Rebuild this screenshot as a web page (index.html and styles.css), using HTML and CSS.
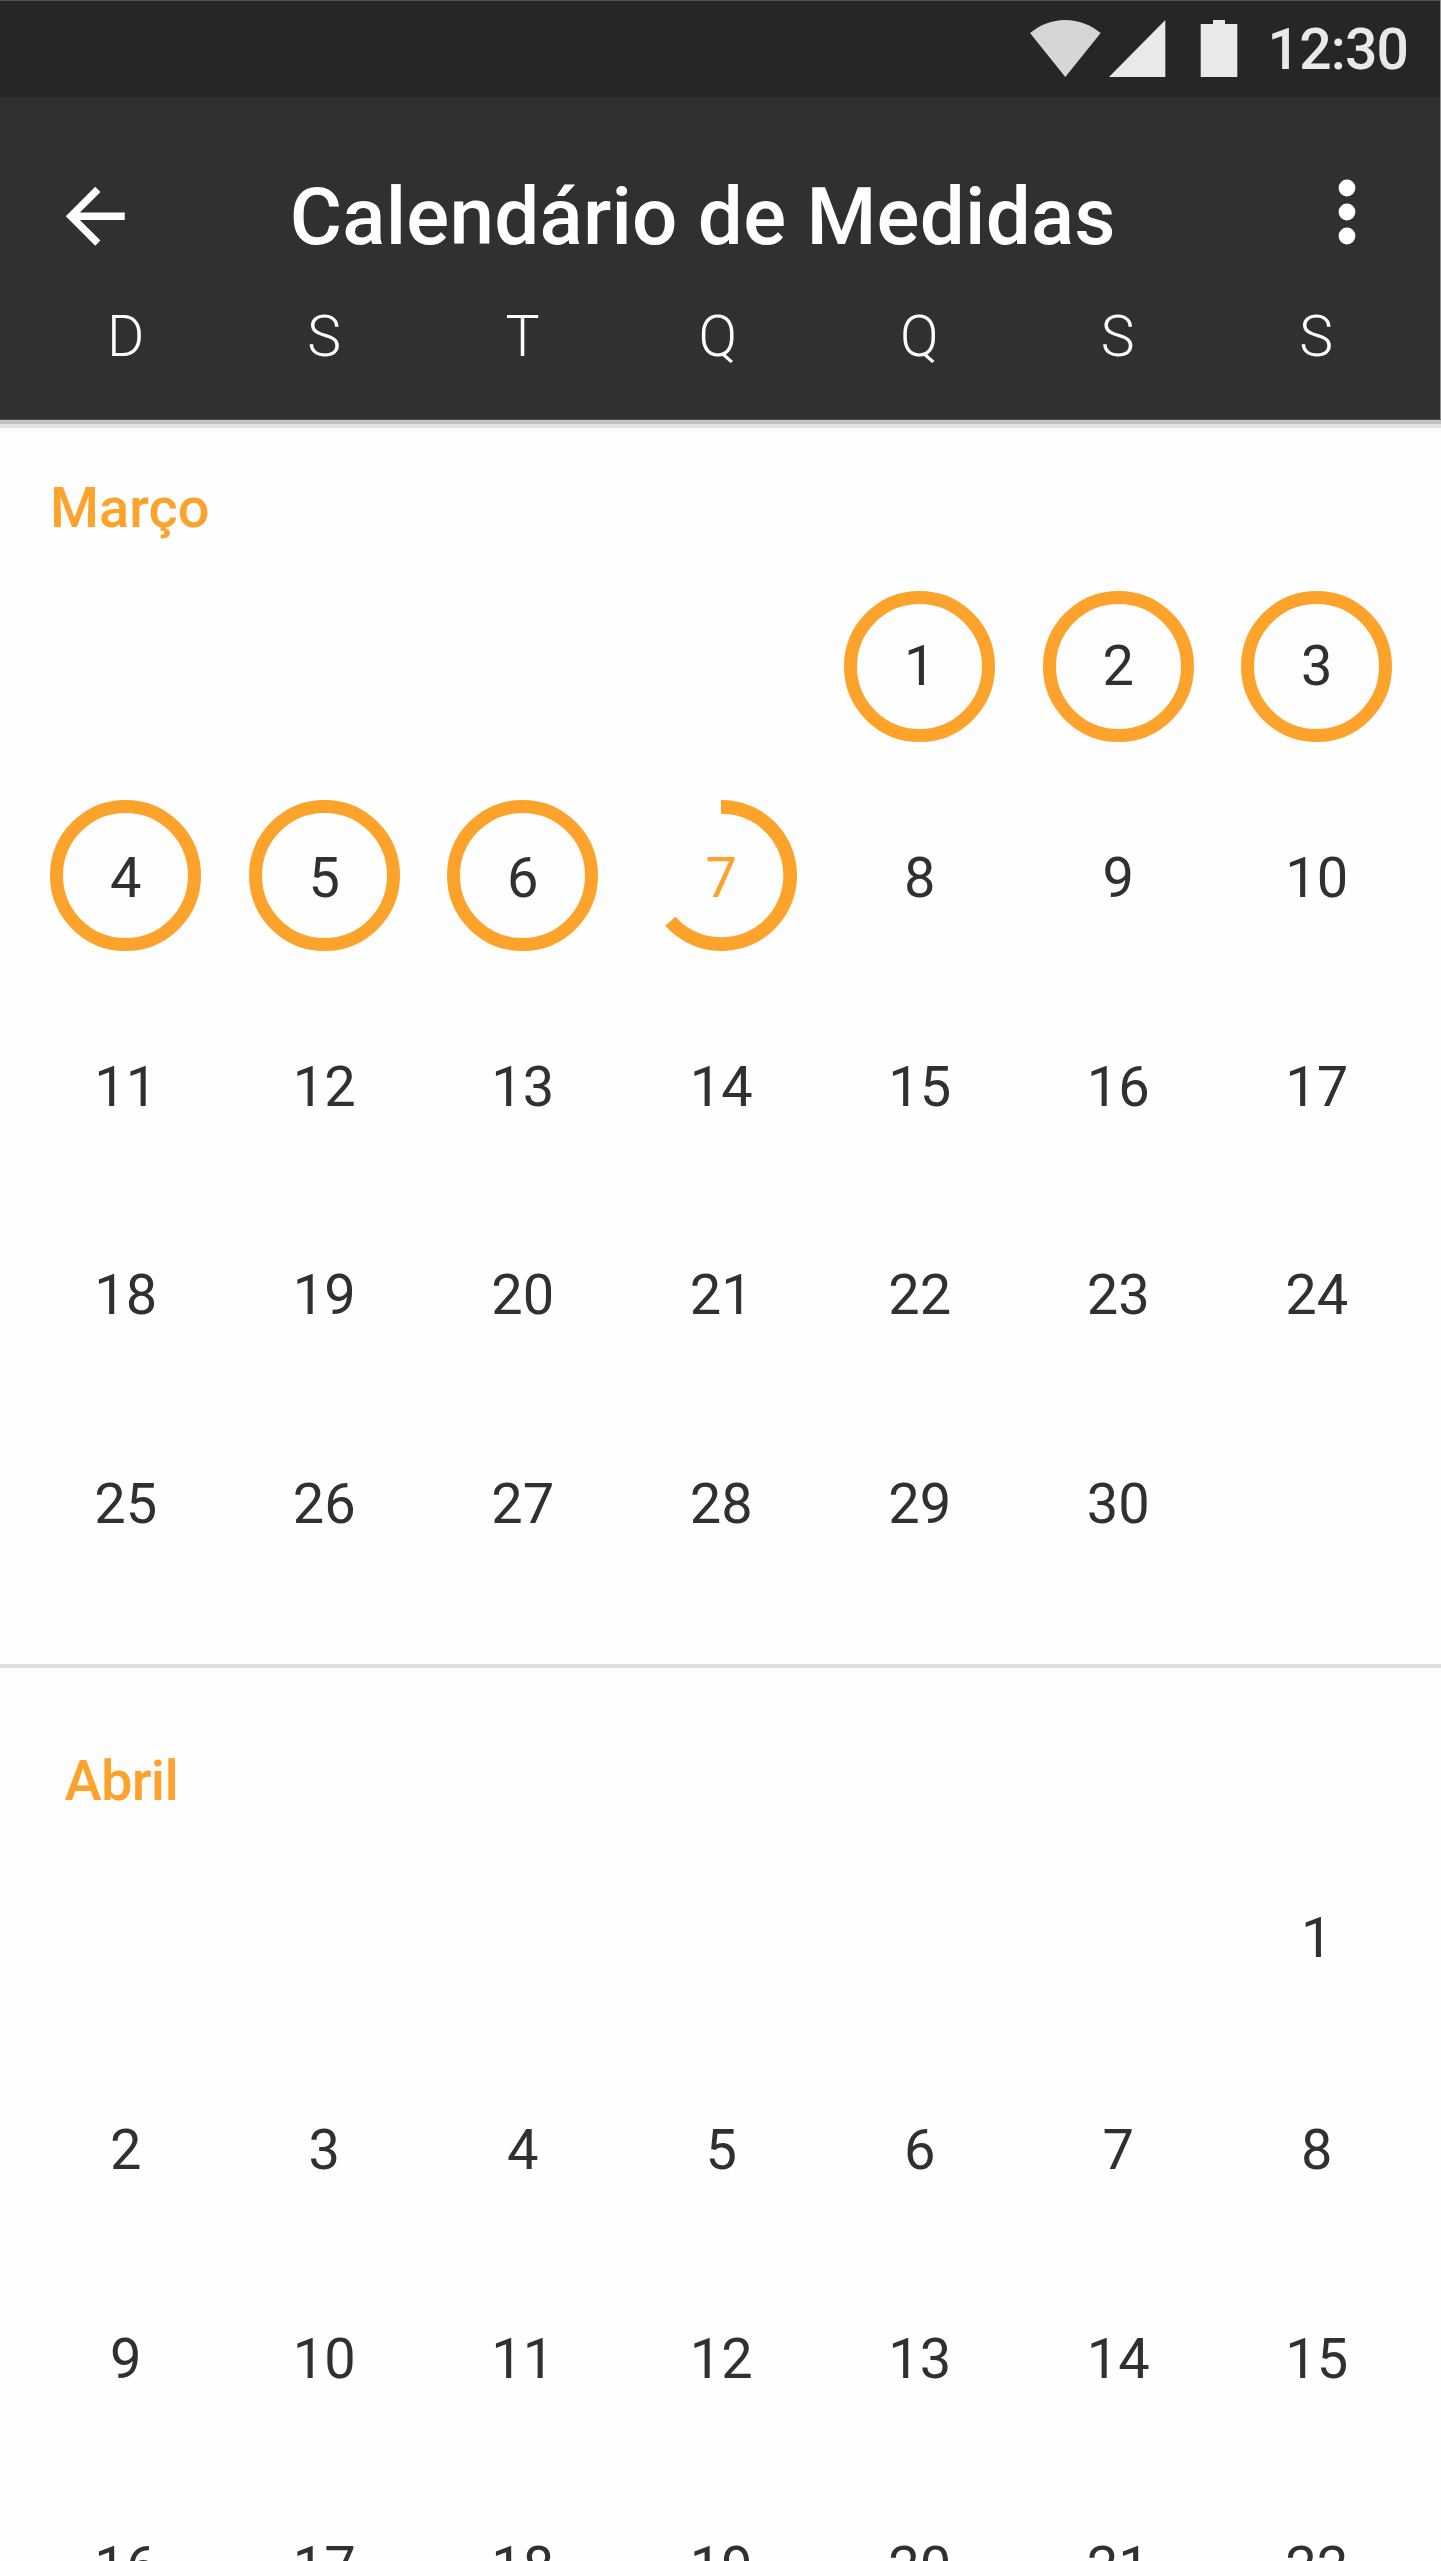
FILE: index.html
```html
<!DOCTYPE html>
<html lang="pt-BR">
<head>
    <meta charset="utf-8">
    <title>Calendário de Medidas</title>
    <link rel="stylesheet" href="styles.css">
</head>
<body>

    <!-- Header -->
    <header class="header">
        <div class="statusBar">
            <svg class="statusIcons" viewBox="0 0 208 57">
                <path class="wifi" d="M0 13C10 5 22 0 35.300 0S60.600 5 70.700 13L35.300 57z"/>
                <path d="M79 57L135.300 0V57z"/>
                <path d="M170.700 4H183V0h12v4h12.300v53h-36.600z"/>
            </svg>
            <span class="time">12:30</span>
        </div>
        <div class="toolbar">
            <svg class="backIcon" viewBox="0 0 24 24"><path d="M20 11H7.830l5.590-5.590L12 4l-8 8 8 8 1.410-1.410L7.830 13H20v-2z"/></svg>
            <h1>Calendário de Medidas</h1>
            <svg class="menuIcon" viewBox="0 0 18 66"><circle cx="9" cy="9" r="8.400"/><circle cx="9" cy="33" r="8.400"/><circle cx="9" cy="57" r="8.400"/></svg>
        </div>
        <div class="weekdays">
            <span>D</span><span>S</span><span>T</span><span class="wednesday">Q</span><span>Q</span><span>S</span><span>S</span>
        </div>
    </header>
    <div class="headerShadow"></div>

    <!-- Março -->
    <section class="month">
        <h2>Março</h2>
        <div class="days">
            <span class="day done startThu">1</span><span class="day done">2</span><span class="day done">3</span>
            <span class="day done low">4</span><span class="day done low">5</span><span class="day done low">6</span>
            <span class="day today">7
                <svg class="progress" viewBox="0 0 151 151"><path d="M75 6.850A68.650 68.650 0 1 1 24.300 121.200"/></svg>
            </span>
            <span class="day">8</span><span class="day">9</span><span class="day">10</span>
            <span class="day">11</span><span class="day">12</span><span class="day">13</span><span class="day">14</span><span class="day">15</span><span class="day">16</span><span class="day">17</span>
            <span class="day">18</span><span class="day">19</span><span class="day">20</span><span class="day">21</span><span class="day">22</span><span class="day">23</span><span class="day">24</span>
            <span class="day">25</span><span class="day">26</span><span class="day">27</span><span class="day">28</span><span class="day">29</span><span class="day">30</span>
        </div>
    </section>

    <!-- Abril -->
    <section class="month april">
        <h2>Abril</h2>
        <div class="days">
            <span class="day startSat">1</span>
            <span class="day">2</span><span class="day">3</span><span class="day">4</span><span class="day">5</span><span class="day">6</span><span class="day">7</span><span class="day">8</span>
            <span class="day">9</span><span class="day">10</span><span class="day">11</span><span class="day">12</span><span class="day">13</span><span class="day">14</span><span class="day">15</span>
            <span class="day">16</span><span class="day">17</span><span class="day">18</span><span class="day">19</span><span class="day">20</span><span class="day">21</span><span class="day">22</span>
        </div>
    </section>

</body>
</html>
```

FILE: styles.css
```css
body {
    margin: 0;
    width: 1441px;
    height: 2561px;
    overflow: hidden;
    background-color: #fefefe;
    color: #303030;
    font-family: Roboto, sans-serif;
    font-size: 56px;
}

h1, h2 {
    margin: 0;
    font-weight: 500;
}

.header {
    box-sizing: border-box;
    height: 420px;
    background-color: #303030;
    border-right: 1px solid #8f8f8f;
    border-bottom: 1px solid #4c4c4c;
    color: white;
}

.statusBar {
    box-sizing: border-box;
    display: flex;
    align-items: flex-start;
    height: 97px;
    padding: 19px 0 0 1029.600px;
    background-color: #262626;
    border-top: 1px solid #555555;
    color: #e9e9e9;
}

.statusIcons {
    flex: none;
    width: 208px;
    height: 57px;
    fill: #e9e9e9;
}

.statusIcons .wifi {
    fill: #d6d6d6;
}

.time {
    margin: -3px 0 0 30px;
    font-size: 57px;
    font-weight: 500;
    line-height: 66px;
    letter-spacing: -0.800px;
}

.toolbar {
    display: flex;
    align-items: center;
    height: 186px;
    margin-top: 26px;
}

.backIcon {
    flex: none;
    width: 88.500px;
    height: 88.500px;
    margin-left: 51.300px;
    fill: white;
}

h1 {
    flex: none;
    width: 829px;
    margin: 2px 0 0 150px;
    font-size: 80px;
    line-height: 94px;
    letter-spacing: 0.250px;
    white-space: nowrap;
}

.menuIcon {
    flex: none;
    width: 18px;
    height: 66px;
    margin: -9px 0 0 219px;
    fill: white;
}

.weekdays {
    display: grid;
    grid-template-columns: repeat(7, 198.400px);
    margin: -5px 0 0 26.500px;
    font-size: 57px;
    font-weight: 300;
    line-height: 66px;
    text-align: center;
}

.wednesday {
    margin-left: -6px;
}

/* stepped shadow under the header */
.headerShadow {
    height: 12px;
    background: linear-gradient(#c2c2c2 4px, #e2e2e2 4px, #e2e2e2 8px, #f8f8f8 8px);
}

.month h2 {
    padding: 43px 0 17px 50px;
    color: #fda22b;
    font-size: 56px;
    line-height: 66px;
}

.days {
    display: grid;
    grid-template-columns: repeat(7, 198.500px);
    grid-template-rows: 216px;
    grid-auto-rows: 208.600px;
    padding: 0 0 55.600px 26.500px;
}

.day {
    position: relative;
    display: flex;
    justify-content: center;
    align-items: center;
    line-height: 66px;
}

.startThu {
    grid-column-start: 5;
}

.startSat {
    grid-column-start: 7;
}

/* ring around a day with all measures taken */
.done::after {
    content: "";
    position: absolute;
    box-sizing: border-box;
    width: 151px;
    height: 151px;
    border: 13.700px solid #fda22b;
    border-radius: 50%;
}

.low::after {
    margin-top: -6px;
}

.today {
    color: #fda22b;
}

.progress {
    position: absolute;
    width: 151px;
    height: 151px;
    margin-top: -6px;
    fill: none;
    stroke: #fda22b;
    stroke-width: 13.700;
}

.april {
    border-top: 4px solid #e0e0e0;
}

.april h2 {
    padding: 80px 0 16px 64.500px;
    letter-spacing: -0.700px;
}

.april .days {
    padding-bottom: 0;
}
```
